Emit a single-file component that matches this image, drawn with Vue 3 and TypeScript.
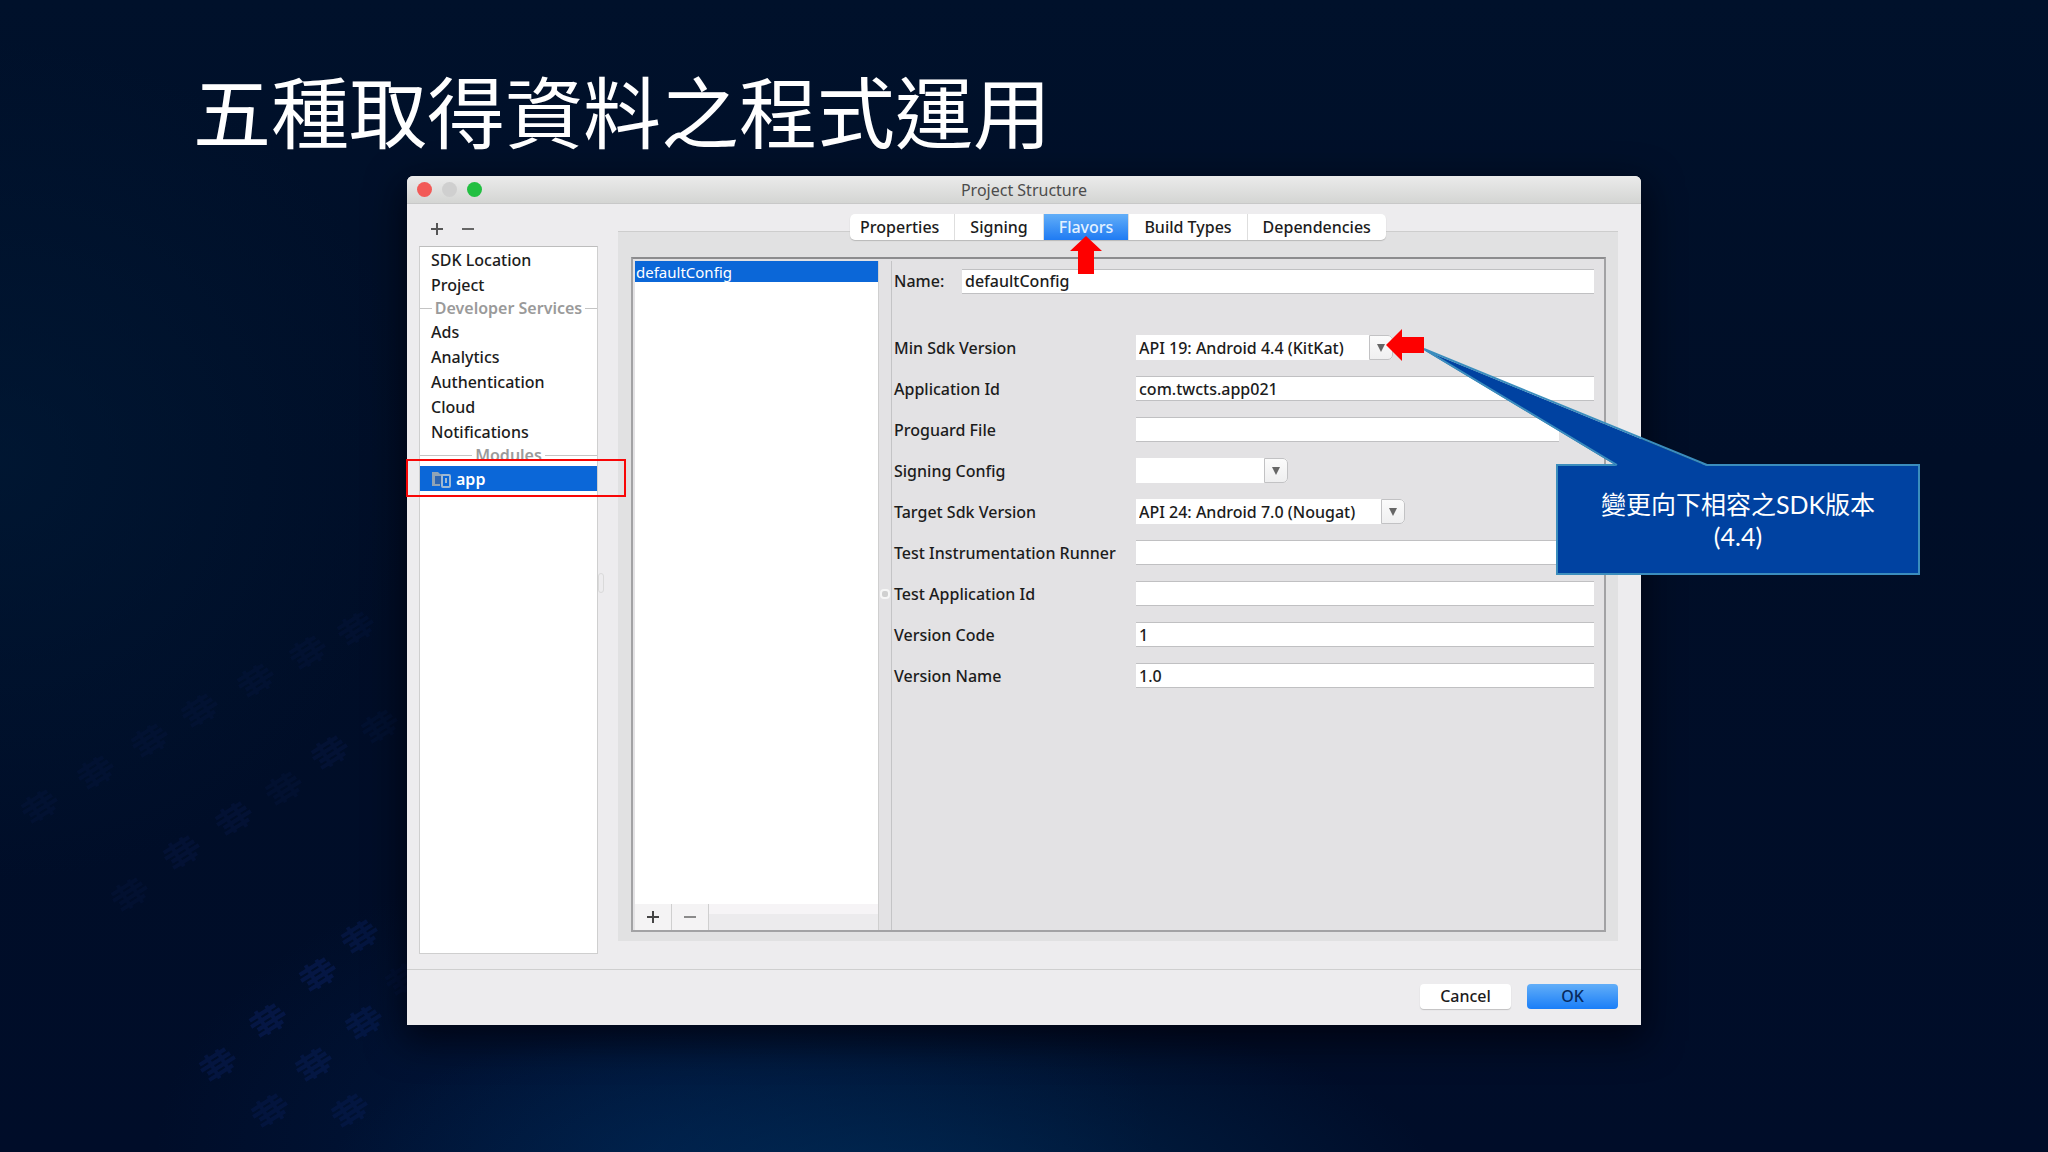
<script setup lang="ts">
import { ref } from 'vue'

interface Field {
  id: string
  label: string
  kind: 'text' | 'select'
  value: string
  size?: 'short' | 'medium' | 'long' | 'browse'
  pointer?: boolean
}

const general: string[] = ['SDK Location', 'Project']
const services: string[] = ['Ads', 'Analytics', 'Authentication', 'Cloud', 'Notifications']
const tabs: string[] = ['Properties', 'Signing', 'Flavors', 'Build Types', 'Dependencies']
const activeTab = ref('Flavors')
const flavorName = ref('defaultConfig')

const fields = ref<Field[]>([
  { id: 'min-sdk', label: 'Min Sdk Version', kind: 'select', value: 'API 19: Android 4.4 (KitKat)', size: 'medium', pointer: true },
  { id: 'app-id', label: 'Application Id', kind: 'text', value: 'com.twcts.app021' },
  { id: 'proguard', label: 'Proguard File', kind: 'text', value: '', size: 'browse' },
  { id: 'signing', label: 'Signing Config', kind: 'select', value: '', size: 'short' },
  { id: 'target-sdk', label: 'Target Sdk Version', kind: 'select', value: 'API 24: Android 7.0 (Nougat)', size: 'long' },
  { id: 'runner', label: 'Test Instrumentation Runner', kind: 'text', value: '' },
  { id: 'test-id', label: 'Test Application Id', kind: 'text', value: '' },
  { id: 'version-code', label: 'Version Code', kind: 'text', value: '1' },
  { id: 'version-name', label: 'Version Name', kind: 'text', value: '1.0' },
])

// Faint marks scattered over the lower left of the backdrop: x, y, strength
const marks: [number, number, number][] = [
  [356, 628, 2], [308, 652, 2], [256, 680, 2], [200, 710, 2], [150, 740, 2], [96, 772, 2], [40, 806, 2],
  [380, 726, 2], [330, 752, 3], [284, 788, 2], [234, 818, 3], [182, 852, 3], [130, 894, 2],
  [360, 936, 5], [318, 974, 6], [268, 1020, 6], [364, 1022, 5], [218, 1064, 5], [314, 1064, 5],
  [404, 978, 2], [270, 1110, 4], [350, 1110, 4],
]
</script>

<template>
  <main class="slide">
    <svg class="backdrop" viewBox="0 0 2048 1152" preserveAspectRatio="none" aria-hidden="true">
      <g v-for="(m, i) in marks" :key="i" :transform="`translate(${m[0]} ${m[1]}) rotate(-32)`" :opacity="m[2] / 28">
        <path d="M-16 -9H14M-18 -3H16M-14 3H18M-16 9H12M-6 -14V13M6 -13V14" stroke="#1838a0" stroke-width="4" fill="none" />
      </g>
    </svg>

    <h1 class="title">五種取得資料之程式運用</h1>

    <section class="window">
      <header class="titlebar">
        <span class="light red"></span>
        <span class="light grey"></span>
        <span class="light green"></span>
        <span class="caption">Project Structure</span>
      </header>

      <div class="body">
        <aside class="sidebar">
          <div class="tools">
            <button type="button" aria-label="Add module">
              <svg width="14" height="14" viewBox="0 0 14 14"><path d="M7 1V13M1 7H13" stroke="#555" stroke-width="2" /></svg>
            </button>
            <button type="button" aria-label="Remove module">
              <svg width="14" height="14" viewBox="0 0 14 14"><path d="M1 7H13" stroke="#666" stroke-width="2" /></svg>
            </button>
          </div>
          <nav class="list">
            <button v-for="g in general" :key="g" type="button" class="item">{{ g }}</button>
            <div class="divider"><span>Developer Services</span></div>
            <button v-for="s in services" :key="s" type="button" class="item">{{ s }}</button>
            <div class="divider"><span>Modules</span></div>
            <div class="module">
              <button type="button" class="item selected">
                <svg width="20" height="18" viewBox="0 0 20 18" fill="none">
                  <path d="M1 2H7L9 4H12V6H4V14H9V16H1Z" fill="#8fa3b5" />
                  <path d="M4 6H10V14H4Z" fill="#2f66b0" />
                  <rect x="11" y="5" width="8" height="12" rx="1" stroke="#9fb9d3" stroke-width="2" />
                  <path d="M15 8V13" stroke="#9fb9d3" stroke-width="2" />
                </svg>
                app
              </button>
              <span class="highlight"></span>
            </div>
          </nav>
        </aside>

        <div class="grip"><i></i></div>

        <div class="main">
          <div class="tabs" role="tablist">
            <div v-for="t in tabs" :key="t" class="tab-cell">
              <button type="button" role="tab" :aria-selected="t === activeTab" :class="{ active: t === activeTab }" @click="activeTab = t">{{ t }}</button>
              <svg v-if="t === 'Flavors'" class="arrow-up" width="32" height="38" viewBox="0 0 32 38">
                <path d="M16 0L32 15H24V38H8V15H0Z" fill="#fe0000" />
              </svg>
            </div>
          </div>

          <div class="panel">
            <div class="inner">
              <div class="flavors">
                <button type="button" class="flavor">defaultConfig</button>
                <div class="flavor-tools">
                  <button type="button" aria-label="Add flavor">
                    <svg width="14" height="14" viewBox="0 0 14 14"><path d="M7 1V13M1 7H13" stroke="#444" stroke-width="2" /></svg>
                  </button>
                  <button type="button" aria-label="Remove flavor">
                    <svg width="14" height="14" viewBox="0 0 14 14"><path d="M1 7H13" stroke="#8a8a8a" stroke-width="2" /></svg>
                  </button>
                </div>
              </div>
              <div class="splitter"><i></i></div>
              <form class="form" @submit.prevent>
                <div class="name-row">
                  <label for="name">Name:</label>
                  <input id="name" v-model="flavorName" type="text" />
                </div>
                <div v-for="f in fields" :key="f.id" class="row">
                  <label :for="f.id">{{ f.label }}</label>
                  <div v-if="f.kind === 'select'" class="combo" :class="f.size">
                    <select :id="f.id" v-model="f.value">
                      <option :value="f.value">{{ f.value }}</option>
                    </select>
                    <span class="knob">
                      <svg width="8" height="8" viewBox="0 0 8 8"><path d="M0 0H8L4 8Z" fill="#666" /></svg>
                    </span>
                    <svg v-if="f.pointer" class="arrow-left" width="38" height="32" viewBox="0 0 38 32">
                      <path d="M0 16L16 0V8H38V24H16V32Z" fill="#fe0000" />
                    </svg>
                  </div>
                  <input v-else :id="f.id" v-model="f.value" type="text" :class="f.size" />
                </div>
              </form>
            </div>
          </div>
        </div>
      </div>

      <footer class="footer">
        <button type="button" class="cancel">Cancel</button>
        <button type="button" class="ok">OK</button>
      </footer>

      <div class="callout">
        <svg class="tail" width="290" height="120" viewBox="0 0 290 120">
          <path d="M193 118L0 2L283 118Z" fill="#0042a1" />
          <path d="M193 117L0 1L283 117" fill="none" stroke="#3b8dbd" stroke-width="2" />
        </svg>
        <p>變更向下相容之SDK版本<br />(4.4)</p>
      </div>
    </section>
  </main>
</template>

<style>
body {
  background: #000d28;
}
</style>

<style scoped>
.slide {
  position: relative;
  box-sizing: border-box;
  min-height: 100vh;
  overflow: hidden;
  display: grid;
  grid-template-columns: 407fr 1234fr 407fr;
  grid-template-rows: 176px auto 1fr;
  background:
    radial-gradient(ellipse 560px 190px at 43% 103%, rgba(0, 56, 104, 0.55), transparent 100%),
    radial-gradient(ellipse 500px 300px at 32% 100%, rgba(0, 40, 96, 0.4), transparent 100%),
    radial-gradient(ellipse 420px 420px at 0% 40%, rgba(0, 30, 60, 0.5), transparent 100%),
    linear-gradient(180deg, #00112b 0%, #000e27 40%, #000d29 100%);
  font-family: "Noto Sans", "Open Sans", "Noto Sans CJK TC", sans-serif;
  font-size: 16px;
  font-weight: 500;
  line-height: 24px;
  color: #1c1c1c;
}
.backdrop {
  position: absolute;
  inset: 0;
  width: 100%;
  height: 100%;
}
.title {
  position: relative;
  grid-column: 1 / -1;
  margin: 0;
  padding: 57px 0 0 193px;
  font-family: "Noto Sans CJK TC", sans-serif;
  font-weight: 400;
  font-size: 78px;
  line-height: 104px;
  color: #fff;
  white-space: nowrap;
}
button,
input,
select {
  box-sizing: border-box;
  margin: 0;
  padding: 0;
  border: 0;
  border-radius: 0;
  background: none;
  font: inherit;
  color: inherit;
  outline: none;
}
.window {
  position: relative;
  grid-column: 2;
  min-height: 849px;
  display: flex;
  flex-direction: column;
  border-radius: 6px 6px 0 0;
  background: #edecee;
  box-shadow: 0 12px 36px 4px rgba(0, 0, 10, 0.7);
}
.titlebar {
  position: relative;
  box-sizing: border-box;
  height: 28px;
  padding-left: 10px;
  display: flex;
  align-items: center;
  gap: 10px;
  border-bottom: 1px solid #c8c8c8;
  border-radius: 6px 6px 0 0;
  background: linear-gradient(#ebebeb, #d4d5d3);
}
.light {
  width: 15px;
  height: 15px;
  border-radius: 50%;
}
.red { background: #f25a57; }
.grey { background: #cfcfcf; }
.green { background: #22bf41; }
.caption {
  position: absolute;
  inset: 0;
  text-align: center;
  font-weight: 400;
  line-height: 28px;
  color: #4c4c4c;
}
.body {
  flex: 1;
  display: flex;
}
.sidebar {
  width: 179px;
  padding: 0 0 15px 12px;
  display: flex;
  flex-direction: column;
}
.tools {
  height: 42px;
  display: flex;
  align-items: center;
  gap: 17px;
  padding: 8px 0 0 11px;
  box-sizing: border-box;
}
.tools button {
  width: 14px;
  height: 14px;
  display: flex;
}
.list {
  flex: 1;
  display: flex;
  flex-direction: column;
  border: 1px solid #cfcfcf;
  border-top-color: #bdbdbd;
  background: #fff;
}
.item {
  width: 100%;
  height: 25px;
  padding-left: 11px;
  display: flex;
  align-items: center;
  text-align: left;
  white-space: nowrap;
}
.divider {
  height: 22px;
  display: flex;
  align-items: center;
  gap: 3px;
  font-weight: 600;
  color: #9a9a9a;
  white-space: nowrap;
}
.divider::before,
.divider::after {
  content: "";
  flex: 1;
  height: 1px;
  background: #c4c4c4;
}
.module {
  position: relative;
}
.selected {
  gap: 5px;
  background: #0b67d8;
  color: #fff;
  font-weight: 600;
}
.highlight {
  position: absolute;
  inset: -7px -29px -6px -14px;
  border: 2px solid #f80606;
}
.grip {
  box-sizing: border-box;
  width: 20px;
  padding-bottom: 8px;
  display: flex;
  align-items: center;
}
.grip i {
  width: 4px;
  height: 18px;
  border: 1px solid #dadada;
  border-radius: 3px;
}
.main {
  flex: 1;
  padding: 10px 23px 28px 7px;
  margin-left: -7px;
  display: flex;
  flex-direction: column;
}
.tabs {
  position: relative;
  z-index: 1;
  align-self: center;
  height: 26px;
  margin-bottom: -9px;
  display: flex;
  border-radius: 5px;
  background: #fff;
  box-shadow: 0 1px 1px #b9b9b9;
}
.tab-cell {
  position: relative;
  display: flex;
  border-left: 1px solid #dedede;
}
.tab-cell:first-child {
  border-left: 0;
}
.tabs button {
  padding: 0 15px;
  white-space: nowrap;
}
.tab-cell:first-child button {
  padding-left: 10px;
}
.tabs .active {
  background: linear-gradient(#62aef8, #1f7bf3);
  color: #e3f1ff;
}
.arrow-up {
  position: absolute;
  left: calc(50% - 16px);
  top: 22px;
}
.panel {
  flex: 1;
  display: flex;
  padding: 25px 12px 9px 13px;
  border-top: 1px solid #cdcdcd;
  background: #e1e1e2;
}
.inner {
  flex: 1;
  display: flex;
  padding: 2px 0 0 2px;
  border: 2px solid #a2a2a4;
  border-top-color: #8c8c8e;
  background: #e3e2e4;
}
.flavors {
  width: 243px;
  display: flex;
  flex-direction: column;
  justify-content: space-between;
  background: #fff;
}
.flavor {
  height: 21px;
  padding-left: 1px;
  font-size: 15px;
  font-weight: 400;
  line-height: 20px;
  text-align: left;
  background: #0b67d8;
  color: #fff;
}
.flavor-tools {
  height: 26px;
  display: flex;
  background: linear-gradient(#f6f4f6 40%, #ecebed 40%);
}
.flavor-tools button {
  width: 37px;
  display: flex;
  align-items: center;
  justify-content: center;
  border-right: 1px solid #cfcfcf;
  background: #f4f3f4;
}
.splitter {
  box-sizing: border-box;
  width: 14px;
  padding-top: 328px;
  border-left: 1px solid #cfcfcf;
  border-right: 1px solid #c4c4c6;
}
.splitter i {
  display: block;
  width: 6px;
  height: 6px;
  margin-left: 1px;
  border: 2px solid #f6f6f6;
  border-radius: 4px;
  background: #d0d0d0;
}
.form {
  flex: 1;
  padding: 8px 10px 0 2px;
}
.name-row {
  display: flex;
  align-items: center;
  height: 24px;
  margin-bottom: 34px;
}
.name-row label {
  width: 68px;
}
.row {
  display: flex;
  align-items: center;
  height: 41px;
}
.row label {
  width: 242px;
  white-space: nowrap;
}
.form input {
  flex: 1;
  min-width: 0;
  height: 25px;
  padding-left: 3px;
  border-top: 1px solid #c0c0c2;
  border-bottom: 1px solid #c0c0c2;
  background: #fff;
}
.form .browse {
  margin-right: 35px;
}
.combo {
  position: relative;
  height: 25px;
}
.combo select {
  width: 100%;
  height: 25px;
  padding-left: 3px;
  appearance: none;
  border-radius: 0 5px 5px 0;
  background: #fff;
}
.short { width: 152px; }
.medium { width: 257px; }
.long { width: 269px; }
.knob {
  position: absolute;
  top: 0;
  right: 0;
  box-sizing: border-box;
  width: 24px;
  height: 25px;
  display: flex;
  align-items: center;
  justify-content: center;
  border: 1px solid #c2c2c4;
  border-radius: 0 5px 5px 0;
  background: linear-gradient(#fbfbfb, #efeff0);
  pointer-events: none;
}
.arrow-left {
  position: absolute;
  right: -31px;
  top: -6px;
}
.footer {
  box-sizing: border-box;
  height: 56px;
  padding: 0 23px 3px 0;
  display: flex;
  align-items: center;
  justify-content: flex-end;
  gap: 16px;
  border-top: 1px solid #cfcfcf;
}
.footer button {
  width: 91px;
  height: 25px;
  border-radius: 4px;
}
.cancel {
  background: #fff;
  box-shadow: 0 1px 1px #c0c0c0;
}
.footer .ok {
  background: linear-gradient(#62aef8, #1a7ef8);
  color: #072a5e;
}
.callout {
  position: absolute;
  top: 288px;
  right: -279px;
  box-sizing: border-box;
  width: 364px;
  height: 111px;
  display: flex;
  align-items: center;
  justify-content: center;
  border: 2px solid #3b8dbd;
  background: #0042a1;
}
.callout p {
  margin: 0;
  text-align: center;
  font-family: Lato, "Noto Sans CJK TC", sans-serif;
  font-size: 25px;
  font-weight: 400;
  line-height: 32px;
  color: #fff;
  white-space: nowrap;
}
.tail {
  position: absolute;
  left: -134px;
  top: -118px;
}
</style>
